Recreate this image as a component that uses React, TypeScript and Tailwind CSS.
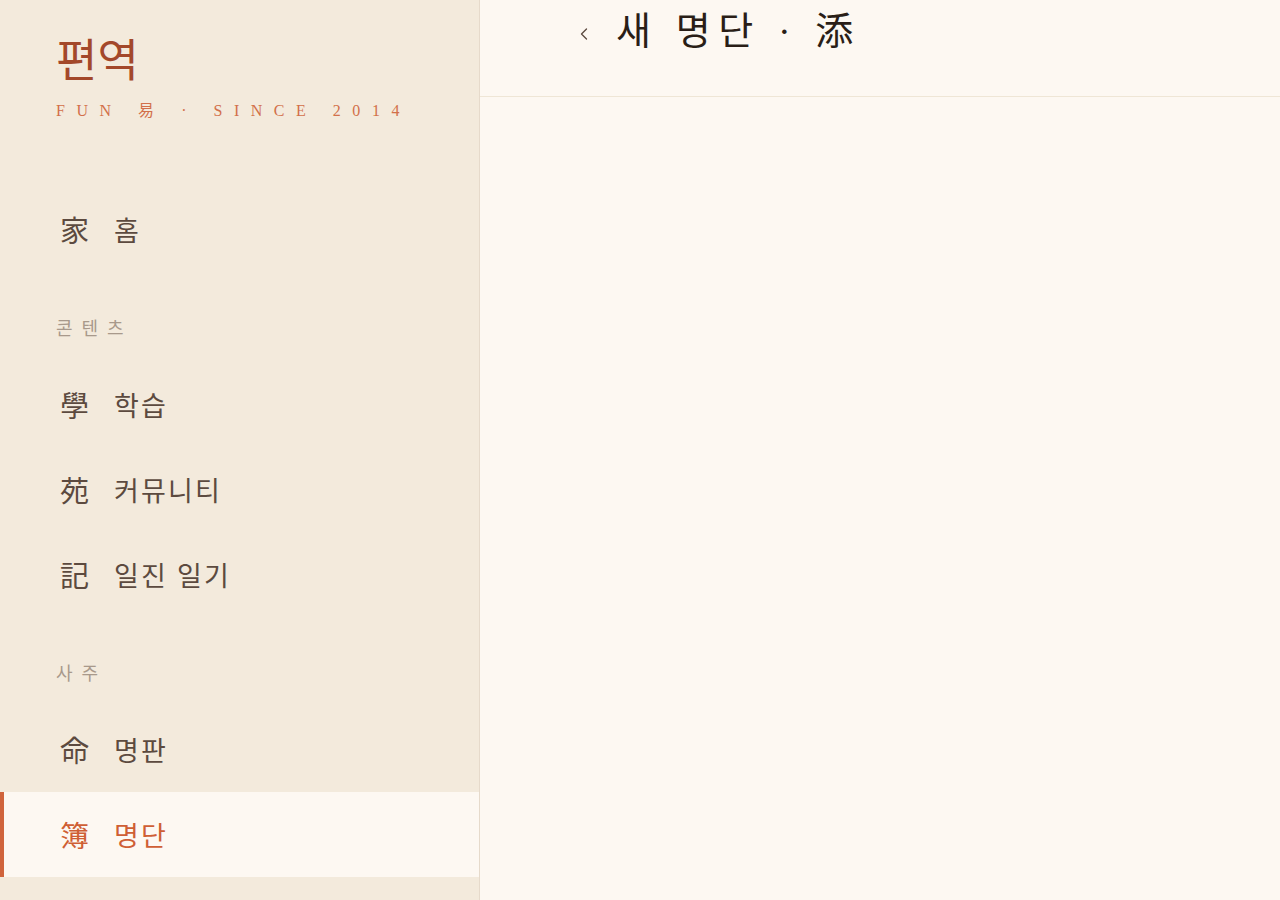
import { ChevronLeft } from 'lucide-react';

const serif = "font-['Liberation_Serif','Noto_Sans_CJK_KR',serif]";

type NavItem = { glyph: string; label: string; active?: boolean };

const contentItems: NavItem[] = [
  { glyph: '學', label: '학습' },
  { glyph: '苑', label: '커뮤니티' },
  { glyph: '記', label: '일진 일기' },
];

const sajuItems: NavItem[] = [
  { glyph: '命', label: '명판' },
  { glyph: '簿', label: '명단', active: true },
];

function NavRow({ item }: { item: NavItem }) {
  return (
    <div
      className={
        item.active
          ? 'flex h-[85px] items-center border-l-4 border-[#D0643C] bg-[#FDF8F2] pt-[6px] pl-[56px] text-[#CF5F35]'
          : 'flex h-[85px] items-center pt-[6px] pl-[60px] text-[#5C4A3F]'
      }
    >
      <span className="w-[29px] text-[29px] leading-none">{item.glyph}</span>
      <span className="ml-[25px] text-[27px] leading-none tracking-[0.08em]">{item.label}</span>
    </div>
  );
}

function SectionLabel({ text }: { text: string }) {
  return (
    <div className="pt-[47px] pb-[23px] pl-[56px] text-[18px] leading-[20px] tracking-[0.5em] text-[#A8998B]">
      {text}
    </div>
  );
}

export default function App() {
  return (
    <div className={`flex h-[900px] w-full overflow-hidden bg-[#FDF8F2] ${serif}`}>
      {/* Sidebar */}
      <aside className="flex w-[480px] shrink-0 flex-col border-r border-[#E6DACB] bg-[#F3EADC]">
        <div className="px-[56px] pt-[32px]">
          <div className="text-[45px] leading-[60px] font-normal text-[#A3482A]">편역</div>
          <div className="mt-[9px] text-[16px] leading-[20px] tracking-[0.72em] whitespace-nowrap text-[#D2704A]">
            FUN 易 · SINCE 2014
          </div>
        </div>

        <div className="mt-[66px]">
          <NavRow item={{ glyph: '家', label: '홈' }} />
        </div>

        <SectionLabel text="콘텐츠" />
        {contentItems.map((item) => (
          <NavRow key={item.label} item={item} />
        ))}

        <SectionLabel text="사주" />
        {sajuItems.map((item) => (
          <NavRow key={item.label} item={item} />
        ))}
      </aside>

      {/* Main */}
      <main className="flex-1">
        <header className="h-[97px] border-b border-[#EFE6D6]">
          <div className="flex h-[62px] items-center pl-[94px]">
            <ChevronLeft className="mt-[6px] h-[20px] w-[20px] text-[#5C4A3F]" strokeWidth={1.6} />
            <h1 className="ml-[22px] text-[38px] leading-none font-normal tracking-[0.2em] text-[#2A1E17]">
              새 명단 · 添
            </h1>
          </div>
        </header>
      </main>
    </div>
  );
}
